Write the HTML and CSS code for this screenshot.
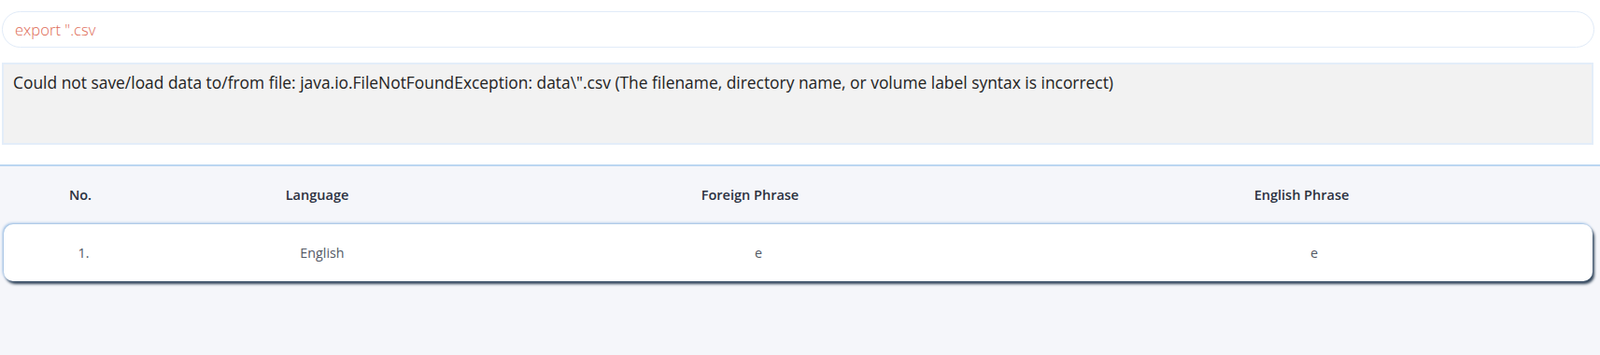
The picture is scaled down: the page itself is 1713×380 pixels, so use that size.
FILE: index.html
```html
<!DOCTYPE html>
<html lang="en">
<head>
    <meta charset="UTF-8">
    <meta name="viewport" content="width=device-width, initial-scale=1.0">
    <title>Phrase Book</title>
    <link rel="stylesheet" href="styles.css">
</head>
<body>
    <div class="top">
        <input type="text" class="command" value="export &quot;.csv">
        <div class="output">Could not save/load data to/from file: java.io.FileNotFoundException: data\".csv (The filename, directory name, or volume label syntax is incorrect)</div>
    </div>
    <div class="list">
        <div class="list-header">
            <span>No.</span>
            <span>Language</span>
            <span>Foreign Phrase</span>
            <span>English Phrase</span>
        </div>
        <div class="phrase-card">
            <span>1.</span>
            <span>English</span>
            <span>e</span>
            <span>e</span>
        </div>
    </div>
</body>
</html>
```

FILE: styles.css
```css
body {
    margin: 0;
    font-family: "Open Sans", "Noto Sans", sans-serif;
    background: #ffffff;
    height: 100vh;
    display: flex;
    flex-direction: column;
}
.top {
    padding: 12px 6px 21px 2px;
}
.command {
    display: block;
    box-sizing: border-box;
    width: 100%;
    height: 39px;
    padding: 0 13px;
    border: 1.5px solid #e1ebf8;
    border-radius: 20px;
    font-family: inherit;
    font-size: 16.6px;
    font-weight: 300;
    color: #de6a55;
    background: white;
    outline: none;
}
.output {
    box-sizing: border-box;
    height: 88px;
    margin: 16px 1px 0 0;
    padding: 7px 10px;
    border: 2px solid #e3edf9;
    background: #f2f2f2;
    color: #222;
    font-size: 17.4px;
    line-height: 24px;
}
.list {
    flex: 1;
    background: #f5f6fa;
    border-top: 2px solid #bbd6f1;
}
.list-header {
    display: grid;
    grid-template-columns: 172px 335px 592px 589px;
    height: 61px;
    align-items: center;
    font-size: 14.5px;
    font-weight: 600;
    color: #2b3140;
    text-align: center;
}
.phrase-card {
    display: grid;
    grid-template-columns: 171px 340px 594px 1fr;
    align-items: center;
    height: 61px;
    margin: 1px 8px 0 4px;
    background: white;
    border-radius: 10px;
    box-shadow: -1px -1px 3px #8ab3df, 2px 3px 3px #2f4257;
    font-size: 14.3px;
    color: #545966;
    text-align: center;
}
```
